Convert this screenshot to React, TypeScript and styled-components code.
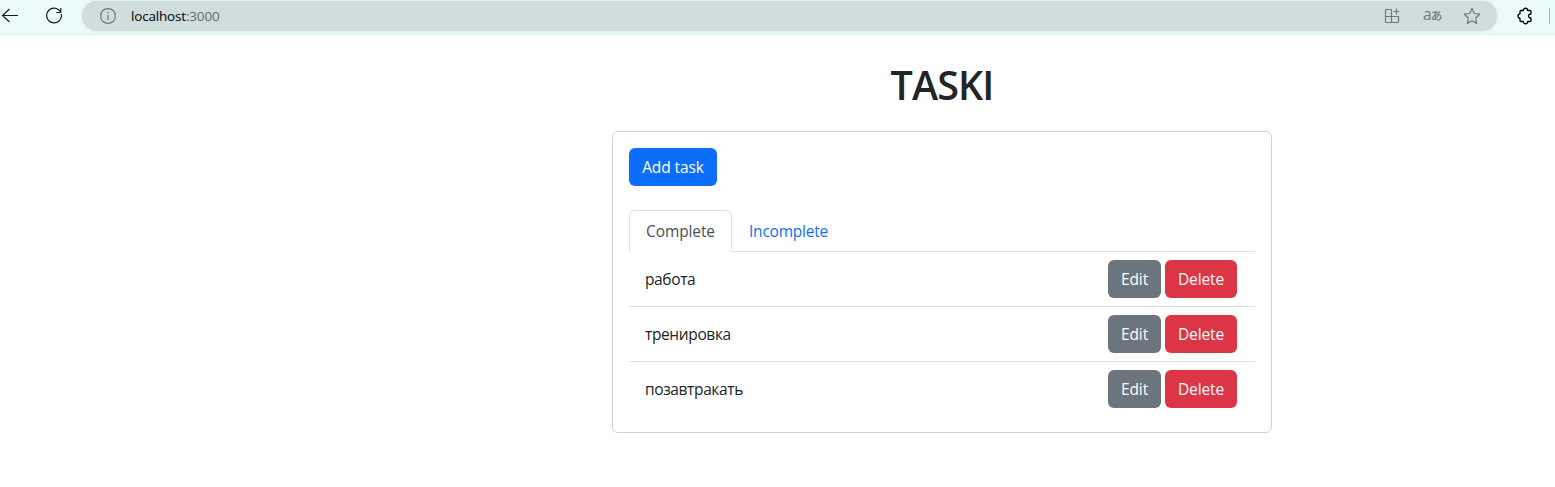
import React from "react";
import styled, { createGlobalStyle } from "styled-components";

const GlobalStyle = createGlobalStyle`
  *, *::before, *::after { box-sizing: border-box; }
  body {
    margin: 0;
    background: #fff;
    color: #212529;
    font-family: "Segoe UI", "Open Sans", "Noto Sans", sans-serif;
    font-size: 15.5px;
    line-height: 24px;
  }
`;

const BrowserBar = styled.header`
  display: flex;
  align-items: center;
  height: 35px;
  padding-bottom: 3px;
  background: #ebfbfb;
  border-bottom: 1px solid #e3efef;
  color: #1b1b1b;
  svg { display: block; flex: none; }
`;

const BackButton = styled.span`
  width: 46px;
`;

const ReloadButton = styled.span`
  width: 36px;
`;

const AddressField = styled.div`
  display: flex;
  align-items: center;
  width: 1415px;
  height: 30px;
  padding: 0 16px 0 18px;
  border-radius: 15px;
  background: #cfdddc;
  box-shadow: 0 0 3px rgba(120, 150, 150, 0.3);
  color: #707877;
`;

const Address = styled.span`
  flex: 1;
  margin-left: 15px;
  font-size: 13.5px;
  line-height: 20px;
  letter-spacing: -0.18px;
  color: #646b6b;
  b { font-weight: 400; color: #000; }
`;

const FieldActions = styled.div`
  display: flex;
  align-items: center;
  gap: 22px;
`;

const Translate = styled.span`
  display: flex;
  align-items: baseline;
  width: 18px;
  margin: -3px 0 0 1px;
  font-size: 15.5px;
  line-height: 18px;
  small { font: 500 11.5px/18px "Noto Sans CJK JP", sans-serif; margin-left: -1px; }
`;

const Extensions = styled.span`
  margin-left: 20px;
  color: #000;
`;

const BarDivider = styled.span`
  width: 1px;
  height: 16px;
  margin-left: 16px;
  background: #a9b7b7;
`;

const Page = styled.main`
  width: 660px;
  margin-left: 612px;
  padding-top: 26px;
`;

const Title = styled.h1`
  margin: 0 0 22px;
  text-align: center;
  font-size: 39.5px;
  line-height: 48px;
  font-weight: 600;
  letter-spacing: -0.9px;
`;

const Card = styled.section`
  height: 302px;
  padding: 16px;
  border: 1px solid #d0d1d2;
  border-radius: 6px;
`;

const Button = styled.button<{ $bg: string; $width: number }>`
  display: block;
  width: ${(p) => p.$width}px;
  height: 38px;
  padding: 0;
  border: 0;
  border-radius: 6px;
  background: ${(p) => p.$bg};
  color: #fff;
  font: inherit;
  letter-spacing: -0.1px;
  white-space: nowrap;
`;

const Tabs = styled.nav`
  display: flex;
  height: 42px;
  margin-top: 24px;
  border-bottom: 1px solid #dee2e6;
`;

const Tab = styled.a<{ $active?: boolean; $spacing?: number }>`
  height: 42px;
  width: ${(p) => (p.$active ? 103 : 112)}px;
  padding: 8px 0 8px 16px;
  border: 1px solid ${(p) => (p.$active ? "#dee2e6" : "transparent")};
  border-bottom-color: ${(p) => (p.$active ? "#fff" : "transparent")};
  border-radius: 6px 6px 0 0;
  color: ${(p) => (p.$active ? "#495057" : "#0d6efd")};
  letter-spacing: ${(p) => p.$spacing ?? 0}px;
`;

const List = styled.ul`
  margin: 0;
  padding: 0;
  list-style: none;
`;

const Row = styled.li`
  display: flex;
  align-items: center;
  gap: 4px;
  height: 55px;
  padding: 0 18px 0 16px;
  border-bottom: 1px solid #dee2e6;
  &:last-child { border-bottom-color: transparent; }
`;

const TaskName = styled.span`
  flex: 1;
  letter-spacing: -0.37px;
`;

const stroke = { fill: "none", stroke: "currentColor", strokeWidth: 1.2 } as const;

const tasks = ["работа", "тренировка", "позавтракать"];

export default function App() {
  return (
    <>
      <GlobalStyle />
      <BrowserBar>
        <BackButton>
          <svg width="20" height="18" viewBox="0 0 20 18" {...stroke}>
            <path d="M18 8.500H2.500M9.500 2L2.500 8.500l7 6.500" />
          </svg>
        </BackButton>
        <ReloadButton>
          <svg width="18" height="18" viewBox="0 0 18 18" {...stroke}>
            <path d="M15.300 7A7.400 7.400 0 1 1 12.600 2.700L15 5M14.800 1v4.500h-4.500" />
          </svg>
        </ReloadButton>
        <AddressField>
          <svg width="16" height="16" viewBox="0 0 16 16" {...stroke}>
            <circle cx="8" cy="8" r="7.4" />
            <path d="M8 7v5M8 4v1.5" />
          </svg>
          <Address><b>localhost</b>:3000</Address>
          <FieldActions>
            <svg width="16" height="16" viewBox="0 0 16 16" {...stroke}>
              <path d="M7.500 1.500H2.500a1 1 0 0 0-1 1v11a1 1 0 0 0 1 1h11a1 1 0 0 0 1-1V8.500H1.500M7.500 1.500v13M12.500 .5v6M9.500 3.500h6" />
            </svg>
            <Translate>a<small>あ</small></Translate>
            <svg width="18" height="18" viewBox="0 0 18 18" {...stroke} strokeLinejoin="round">
              <path d="M9 1.500l2.300 5 5.300.7-3.900 3.800 1 5.400L9 13.800l-4.700 2.600 1-5.400L1.400 7.200l5.300-.7z" />
            </svg>
          </FieldActions>
        </AddressField>
        <Extensions>
          <svg width="16" height="18" viewBox="0 0 16 18" {...stroke} strokeWidth={1.3} strokeLinejoin="round">
            <path d="M4 3.500h2.300c0-3 4.400-3 4.400 0h2.300a1 1 0 0 1 1 1V7c-3.300-.3-3.300 4.300 0 4v2.500a1 1 0 0 1-1 1h-2.300c0 3-4.400 3-4.400 0H4a1 1 0 0 1-1-1V11.200c-2.700 0-2.700-4.400 0-4.400V4.500a1 1 0 0 1 1-1z" />
          </svg>
        </Extensions>
        <BarDivider />
      </BrowserBar>
      <Page>
        <Title>TASKI</Title>
        <Card>
          <Button $bg="#0d6efd" $width={88}>Add task</Button>
          <Tabs>
            <Tab $active $spacing={-0.1}>Complete</Tab>
            <Tab $spacing={-0.22}>Incomplete</Tab>
          </Tabs>
          <List>
            {tasks.map((name) => (
              <Row key={name}>
                <TaskName>{name}</TaskName>
                <Button $bg="#6c757d" $width={53}>Edit</Button>
                <Button $bg="#dc3545" $width={72}>Delete</Button>
              </Row>
            ))}
          </List>
        </Card>
      </Page>
    </>
  );
}
